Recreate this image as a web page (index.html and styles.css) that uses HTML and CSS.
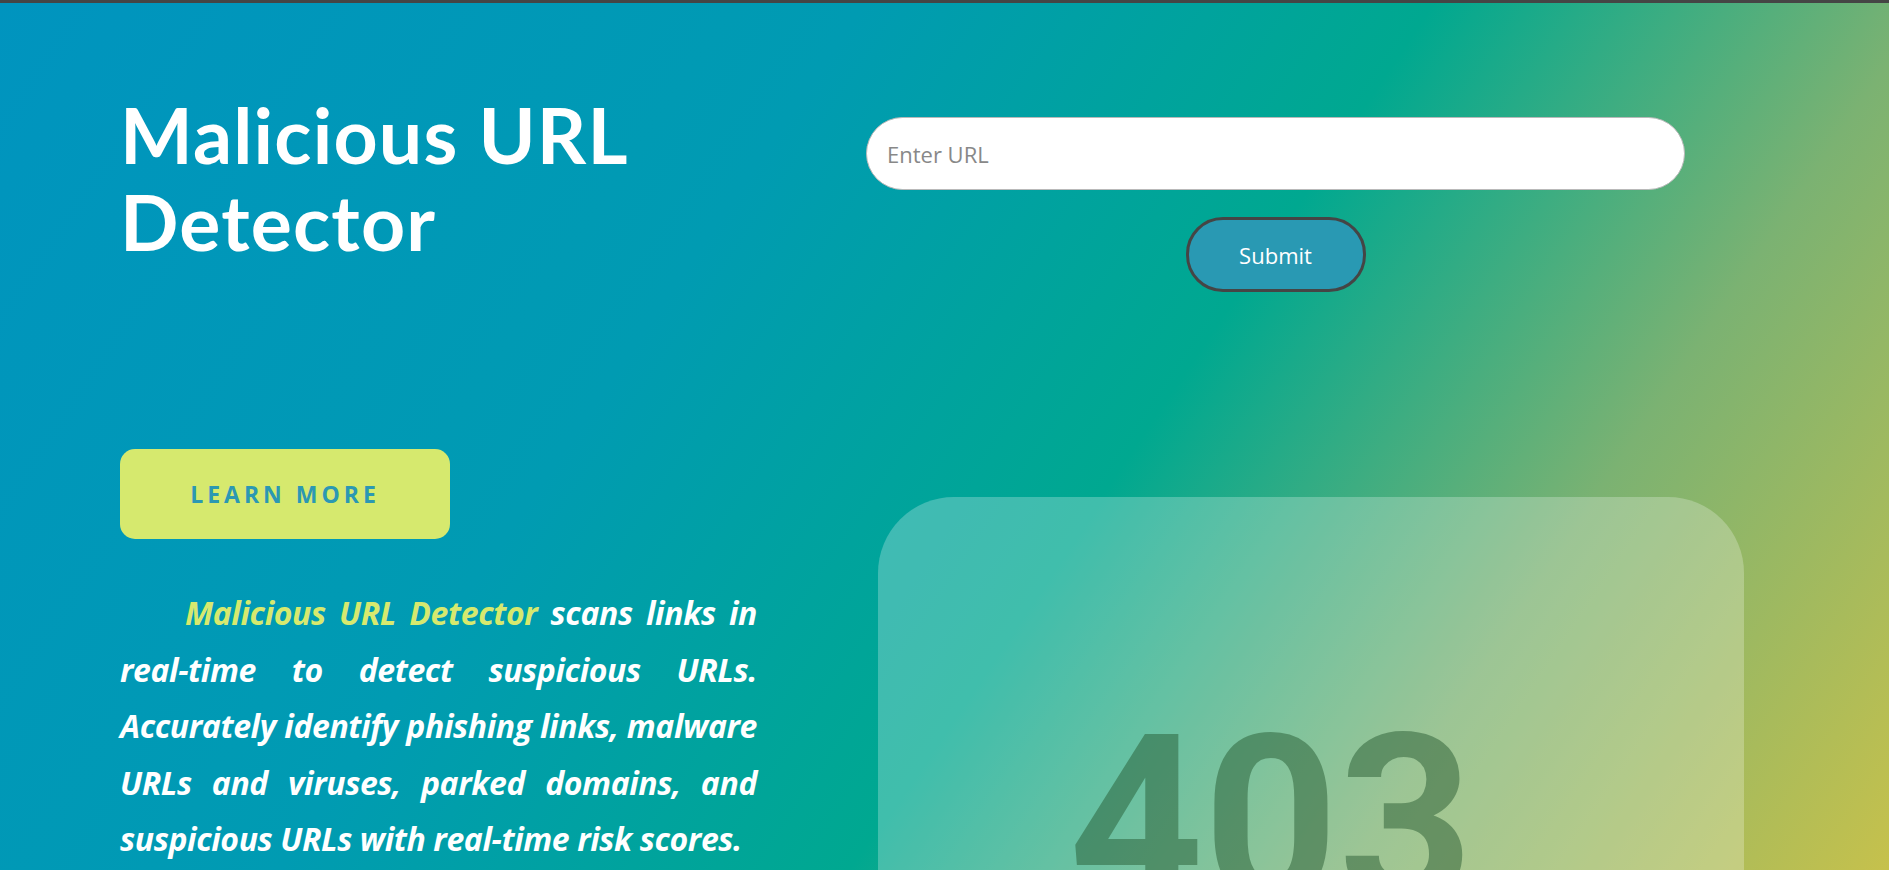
FILE: index.html
```html
<!DOCTYPE html>
<html lang="en">
<head>
<meta charset="utf-8">
<title>Malicious URL Detector</title>
<link rel="stylesheet" href="styles.css">
</head>
<body>
<div class="page">
  <section class="intro">
    <h1 class="title">Malicious URL Detector</h1>
    <a class="learn-btn" href="#">LEARN MORE</a>
    <p class="desc"><span class="hl">Malicious URL Detector</span> scans links in <span class="nw">real-time</span> to detect suspicious URLs. Accurately identify phishing links, malware URLs and viruses, parked domains, and suspicious URLs with <span class="nw">real-time</span> risk scores.</p>
  </section>
  <section class="tool">
    <form class="url-form">
      <input class="url-input" type="text" placeholder="Enter URL">
      <button class="submit-btn" type="button">Submit</button>
    </form>
    <div class="card">
      <div class="code">403</div>
    </div>
  </section>
</div>
</body>
</html>
```
FILE: styles.css
```css
html, body {
  margin: 0;
  padding: 0;
  height: 100%;
  overflow: hidden;
}
body {
  border-top: 3px solid #454545;
  box-sizing: border-box;
  background: linear-gradient(124deg, #0094bf 0%, #009bb2 35%, #00a890 58%, #7bb272 78%, #c6c14c 100%);
  font-family: "Open Sans", "Liberation Sans", sans-serif;
  color: #fff;
}
.page {
  display: grid;
  grid-template-columns: 637px 866px;
  column-gap: 121px;
  padding-left: 120px;
  height: 867px;
}
.intro {
  display: flex;
  flex-direction: column;
  align-items: flex-start;
}
.title {
  margin: 88px 0 0 0;
  font-family: "Lato", "Liberation Sans", sans-serif;
  font-weight: 700;
  font-size: 77px;
  line-height: 87px;
  letter-spacing: 1.2px;
  color: #fff;
}
.learn-btn {
  margin-top: 184px;
  width: 330px;
  height: 90px;
  display: flex;
  align-items: center;
  justify-content: center;
  background: #d6e96e;
  border-radius: 15px;
  color: #2b98b3;
  font-weight: 700;
  font-size: 23px;
  letter-spacing: 4px;
  text-decoration: none;
}
.desc {
  margin: 46px 0 0 0;
  font-style: italic;
  font-weight: 700;
  font-size: 32px;
  line-height: 56.5px;
  letter-spacing: -0.4px;
  text-align: justify;
  text-indent: 65px;
}
.nw {
  white-space: nowrap;
}
.hl {
  color: #d6e96e;
}
.tool {
  display: flex;
  flex-direction: column;
  align-items: flex-start;
}
.url-form {
  margin-top: 114px;
  width: 819px;
  margin-left: -12px;
  display: flex;
  flex-direction: column;
  align-items: center;
}
.url-input {
  width: 100%;
  height: 73px;
  box-sizing: border-box;
  border: 1px solid #b9b9b9;
  border-radius: 37px;
  background: #fff;
  padding: 0 20px;
  font-family: "Open Sans", "Liberation Sans", sans-serif;
  font-size: 22px;
  color: #333;
  outline: none;
}
.url-input::placeholder {
  color: #888;
}
.submit-btn {
  margin-top: 27px;
  width: 180px;
  height: 75px;
  box-sizing: border-box;
  border: 3px solid #454545;
  border-radius: 37px;
  background: #2999b3;
  color: #fff;
  font-family: "Open Sans", "Liberation Sans", sans-serif;
  font-size: 22px;
}
.card {
  margin-top: 205px;
  width: 866px;
  height: 600px;
  border-radius: 76px;
  background: rgba(255, 255, 255, 0.25);
  display: flex;
  justify-content: center;
  flex-shrink: 0;
}
.code {
  margin-top: 207px;
  margin-right: 80px;
  font-family: "Roboto", "Liberation Sans", sans-serif;
  font-weight: 700;
  font-size: 235px;
  line-height: 1;
  color: rgba(35, 85, 45, 0.47);
}
```
